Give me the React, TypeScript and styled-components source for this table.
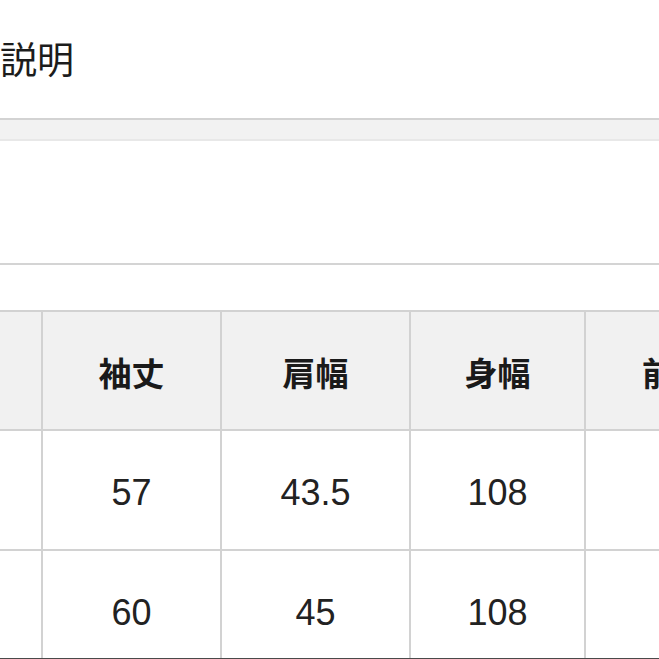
import React from "react";
import styled, { createGlobalStyle } from "styled-components";

const Global = createGlobalStyle`
  html, body { margin: 0; padding: 0; background: #ffffff; }
  body { font-family: "Noto Sans CJK JP", "Noto Sans", sans-serif; color: #1f1f1f; }
`;

const Page = styled.div`
  width: 659px;
  height: 659px;
  box-sizing: border-box;
  overflow: hidden;
  border-bottom: 1px solid #4a4a4a;
  background: #ffffff;
`;

const Title = styled.h2`
  margin: 0;
  padding: 40px 0 0 0;
  height: 36px;
  font-family: "Noto Sans CJK JP", sans-serif;
  font-weight: 400;
  font-size: 37px;
  line-height: 36px;
  color: #1c1c1c;
  white-space: nowrap;
`;

const Band = styled.div`
  margin-top: 42px;
  height: 19px;
  background: #f2f2f2;
  border-top: 2px solid #d3d3d3;
  border-bottom: 2px solid #e8e8e8;
`;

const Divider = styled.div`
  margin-top: 122px;
  height: 2px;
  background: #d4d4d4;
`;

const TableWrap = styled.div`
  margin-top: 45px;
  overflow: hidden;
`;

const Table = styled.table`
  margin-left: -139px;
  width: 903px;
  table-layout: fixed;
  border-collapse: collapse;
`;

const HeadCell = styled.th`
  height: 115px;
  padding: 2px 0 0 0;
  border: 2px solid #d2d2d2;
  background: #f1f1f1;
  text-align: center;
  vertical-align: middle;
  font-family: "Noto Sans CJK JP", sans-serif;
  font-weight: 700;
  font-size: 33px;
  color: #1a1a1a;
  white-space: nowrap;
`;

const BodyCell = styled.td`
  height: 112px;
  padding: 6px 0 0 0;
  border: 2px solid #d2d2d2;
  background: #ffffff;
  text-align: center;
  vertical-align: middle;
  font-family: "Liberation Sans", Arial, sans-serif;
  font-size: 36px;
  color: #222222;
  white-space: nowrap;
`;

const widths = [180, 179, 189, 175, 180];
const headers = ["", "袖丈", "肩幅", "身幅", "前丈"];
const rows = [
  ["", "57", "43.5", "108", ""],
  ["", "60", "45", "108", ""],
  ["", "", "", "", ""],
];

export default function App() {
  return (
    <>
      <Global />
      <Page>
        <Title>説明</Title>
        <Band />
        <Divider />
        <TableWrap>
          <Table>
            <colgroup>
              {widths.map((w, i) => (
                <col key={i} style={{ width: w }} />
              ))}
            </colgroup>
            <thead>
              <tr>
                {headers.map((h, i) => (
                  <HeadCell key={i}>{h}</HeadCell>
                ))}
              </tr>
            </thead>
            <tbody>
              {rows.map((r, ri) => (
                <tr key={ri}>
                  {r.map((c, ci) => (
                    <BodyCell key={ci}>{c}</BodyCell>
                  ))}
                </tr>
              ))}
            </tbody>
          </Table>
        </TableWrap>
      </Page>
    </>
  );
}
